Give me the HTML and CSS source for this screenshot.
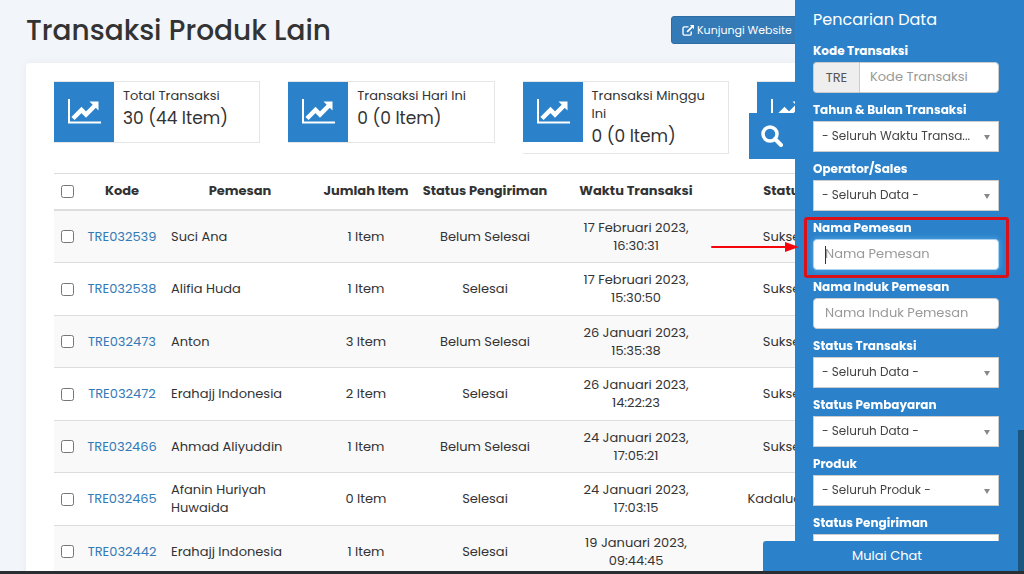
FILE: index.html
```html
<!DOCTYPE html>
<html lang="id">
<head>
<meta charset="utf-8">
<meta name="viewport" content="width=device-width, initial-scale=1">
<title>Transaksi Produk Lain</title>
<link rel="stylesheet" href="styles.css">
</head>
<body>
<svg class="defs" aria-hidden="true">
  <symbol id="chart" viewBox="0 0 34 26">
    <path d="M2 0v23.500h32" fill="none" stroke="currentColor" stroke-width="2"/>
    <path d="M6 19.500l8.500-8.500 4.500 4.500 9-9" fill="none" stroke="currentColor" stroke-width="4.500"/>
    <path d="M22.500 2.500h9v9z" fill="currentColor"/>
  </symbol>
</svg>
<main class="page">
  <header class="page-head">
    <h1 class="page-title">Transaksi Produk Lain</h1>
    <a class="visit" href="#"><svg class="visit-icon" viewBox="0 0 14 12" fill="none" stroke="currentColor" stroke-width="1.500" aria-hidden="true"><path d="M7 2H2.500Q1 2 1 3.500v6Q1 11 2.500 11h6q1.500 0 1.500-1.500V7"/><path d="M5.500 7.500L11 2" stroke-width="2"/><path d="M8.500 0H13v4.500z" fill="currentColor" stroke="none"/></svg>Kunjungi Website</a>
  </header>
  <section class="panel">
    <div class="stats">
      <article class="stat"><div class="stat-icon"><svg><use href="#chart"/></svg></div><div class="stat-text"><div>Total Transaksi</div><div class="stat-value">30 (44 Item)</div></div></article>
      <article class="stat"><div class="stat-icon"><svg><use href="#chart"/></svg></div><div class="stat-text"><div>Transaksi Hari Ini</div><div class="stat-value">0 (0 Item)</div></div></article>
      <article class="stat"><div class="stat-icon"><svg><use href="#chart"/></svg></div><div class="stat-text"><div>Transaksi Minggu Ini</div><div class="stat-value">0 (0 Item)</div></div></article>
      <article class="stat"><div class="stat-icon"><svg><use href="#chart"/></svg></div><div class="stat-text"></div></article>
    </div>
    <table class="orders">
      <colgroup><col class="c-check"><col class="c-code"><col class="c-name"><col class="c-qty"><col class="c-ship"><col class="c-time"><col class="c-state"><col></colgroup>
      <thead><tr><th><input type="checkbox" aria-label="Pilih semua"></th><th>Kode</th><th>Pemesan</th><th>Jumlah Item</th><th>Status Pengiriman</th><th>Waktu Transaksi</th><th>Status</th><th></th></tr></thead>
      <tbody>
        <tr><td><input type="checkbox" aria-label="TRE032539"></td><td><a href="#">TRE032539</a></td><td class="name">Suci Ana</td><td>1 Item</td><td>Belum Selesai</td><td>17 Februari 2023,<br>16:30:31</td><td>Sukses</td><td></td></tr>
        <tr><td><input type="checkbox" aria-label="TRE032538"></td><td><a href="#">TRE032538</a></td><td class="name">Alifia Huda</td><td>1 Item</td><td>Selesai</td><td>17 Februari 2023,<br>15:30:50</td><td>Sukses</td><td></td></tr>
        <tr><td><input type="checkbox" aria-label="TRE032473"></td><td><a href="#">TRE032473</a></td><td class="name">Anton</td><td>3 Item</td><td>Belum Selesai</td><td>26 Januari 2023,<br>15:35:38</td><td>Sukses</td><td></td></tr>
        <tr><td><input type="checkbox" aria-label="TRE032472"></td><td><a href="#">TRE032472</a></td><td class="name">Erahajj Indonesia</td><td>2 Item</td><td>Selesai</td><td>26 Januari 2023,<br>14:22:23</td><td>Sukses</td><td></td></tr>
        <tr><td><input type="checkbox" aria-label="TRE032466"></td><td><a href="#">TRE032466</a></td><td class="name">Ahmad Aliyuddin</td><td>1 Item</td><td>Belum Selesai</td><td>24 Januari 2023,<br>17:05:21</td><td>Sukses</td><td></td></tr>
        <tr><td><input type="checkbox" aria-label="TRE032465"></td><td><a href="#">TRE032465</a></td><td class="name">Afanin Huriyah<br>Huwaida</td><td>0 Item</td><td>Selesai</td><td>24 Januari 2023,<br>17:03:15</td><td>Kadaluarsa</td><td></td></tr>
        <tr><td><input type="checkbox" aria-label="TRE032442"></td><td><a href="#">TRE032442</a></td><td class="name">Erahajj Indonesia</td><td>1 Item</td><td>Selesai</td><td>19 Januari 2023,<br>09:44:45</td><td></td><td></td></tr>
      </tbody>
    </table>
  </section>
</main>

<aside class="filter">
  <button class="filter-toggle" type="button" aria-label="Cari"><svg viewBox="0 0 22 22" fill="none" stroke="currentColor" aria-hidden="true"><circle cx="9" cy="9" r="7" stroke-width="3.500"/><path d="M14 14l6 6" stroke-width="4" stroke-linecap="round"/></svg></button>
  <h2 class="filter-title">Pencarian Data</h2>
  <form class="filter-form">
    <div class="field"><label for="kode">Kode Transaksi</label><div class="group"><span class="prefix">TRE</span><input class="box" id="kode" type="text" placeholder="Kode Transaksi"></div></div>
    <div class="field"><label for="waktu">Tahun &amp; Bulan Transaksi</label><div class="pick"><select class="box" id="waktu"><option>- Seluruh Waktu Transa...</option></select></div></div>
    <div class="field"><label for="sales">Operator/Sales</label><div class="pick"><select class="box" id="sales"><option>- Seluruh Data -</option></select></div></div>
    <div class="field marked"><label for="nama">Nama Pemesan</label><input class="box active" id="nama" type="text" placeholder="Nama Pemesan"><i class="caret"></i><i class="outline"></i>
      <svg class="arrow" viewBox="0 0 88 12" aria-hidden="true"><path d="M1 6h74" stroke="#f5060c" stroke-width="2" stroke-linecap="round"/><path d="M74 1l14 5-14 5z" fill="#f5060c"/></svg></div>
    <div class="field"><label for="induk">Nama Induk Pemesan</label><input class="box" id="induk" type="text" placeholder="Nama Induk Pemesan"></div>
    <div class="field"><label for="status">Status Transaksi</label><div class="pick"><select class="box" id="status"><option>- Seluruh Data -</option></select></div></div>
    <div class="field"><label for="bayar">Status Pembayaran</label><div class="pick"><select class="box" id="bayar"><option>- Seluruh Data -</option></select></div></div>
    <div class="field"><label for="produk">Produk</label><div class="pick"><select class="box" id="produk"><option>- Seluruh Produk -</option></select></div></div>
    <div class="field"><label for="kirim">Status Pengiriman</label><div class="pick"><select class="box" id="kirim"><option>- Seluruh Data -</option></select></div></div>
  </form>
</aside>
<button class="chat" type="button">Mulai Chat</button>
<div class="scroll-thumb"></div>
<div class="bottom-edge"></div>
</body>
</html>
```
FILE: styles.css
```css
* { box-sizing: border-box; }
body {
  margin: 0;
  height: 100vh;
  overflow: hidden;
  background: #f2f5f9;
  color: #333;
  font: 13px/18px Poppins, Inter, "Open Sans", sans-serif;
}
input, select, button { font: inherit; color: inherit; }
a { color: #337ab7; text-decoration: none; }
.defs { display: none; }

.page { padding: 0 33px 0 26px; }
.page-head {
  display: grid;
  grid-template-columns: 1fr 320px;
  align-items: start;
  padding: 13px 0 14px;
}
.page-title { margin: 0; font-size: 28px; line-height: 36px; font-weight: 500; }
.visit {
  display: flex;
  justify-self: start;
  align-items: center;
  gap: 2px;
  height: 28px;
  margin-top: 3px;
  padding: 0 10px;
  border: 1px solid #2e6da4;
  border-radius: 3px;
  background: #337ab7;
  color: #fff;
  font-size: 11px;
  white-space: nowrap;
}
.visit:last-child { padding-right: 24px; }
.visit-icon { width: 13px; height: 11px; }

.panel {
  padding: 18px 28px;
  border-radius: 4px;
  background: #fff;
  box-shadow: 0 0 8px rgba(0, 0, 0, .05);
}
.stats {
  display: grid;
  grid-template-columns: repeat(4, 1fr);
  gap: 28px;
  align-items: start;
  margin-bottom: 19px;
}
.stat { display: flex; border: 1px solid #e4e6e8; border-left: 0; }
.stat-icon {
  display: grid;
  place-items: center;
  flex: none;
  width: 60px;
  height: 60px;
  background: #2b82ca;
  color: #fff;
}
.stat-icon svg { width: 34px; height: 26px; }
.stat-text { padding: 5px 9px 4px; }
.stat-value { font-size: 17px; line-height: 26px; }

.orders { width: 100%; table-layout: fixed; border-collapse: collapse; text-align: center; }
.c-check { width: 26px; }
.c-code { width: 84px; }
.c-name { width: 152px; }
.c-qty { width: 100px; }
.c-ship { width: 138px; }
.c-time { width: 164px; }
.c-state { width: 134px; }
.orders th { height: 36px; padding: 0; border-top: 1px solid #ddd; border-bottom: 2px solid #ddd; white-space: nowrap; font-weight: 700; }
.orders td { height: 52px; padding: 8px 0 7px; border-bottom: 1px solid #ddd; }
.orders .name { padding-left: 7px; text-align: left; }
.orders tbody tr:nth-child(odd) { background: #f9f9f9; }
.orders tbody tr:nth-child(even) td { height: 53px; }
.orders input { display: block; width: 13px; height: 13px; margin: 0 auto; }

.filter {
  position: fixed;
  top: 0;
  right: 0;
  bottom: 0;
  width: 229px;
  padding: 8px 25px 0 18px;
  background: #2b82ca;
  color: #fff;
}
.filter-toggle {
  position: absolute;
  top: 113px;
  right: 100%;
  display: grid;
  place-items: center;
  width: 46px;
  height: 46px;
  padding: 0;
  border: 0;
  background: #2b82ca;
}
.filter-toggle svg { width: 22px; height: 22px; }
.filter-title { margin: 0 0 10px; font-size: 16px; line-height: 24px; font-weight: 400; }
.field { position: relative; margin-bottom: 8px; }
.field label { display: block; height: 20px; font-size: 12px; font-weight: 700; white-space: nowrap; }
.box {
  display: block;
  width: 100%;
  min-width: 0;
  height: 31px;
  padding: 0 11px 2px;
  border: 1px solid #ccc;
  border-radius: 4px;
  background: #fff;
  color: #555;
}
.box::placeholder { color: #999; opacity: 1; }
.box.active { outline: 0; border-color: #a9d3f3; box-shadow: 0 0 6px rgba(140, 205, 255, .5); }
select.box { appearance: none; padding: 0 8px 2px; border-radius: 0; font-size: 12px; color: #444; }
.pick { position: relative; }
.pick::after {
  content: "";
  position: absolute;
  top: 14px;
  right: 9px;
  border: solid transparent;
  border-width: 5px 3px 0;
  border-top-color: #888;
  pointer-events: none;
}
.group { display: flex; }
.group .box { border-radius: 0 4px 4px 0; padding: 0 10px 2px; }
.prefix {
  flex: none;
  width: 46px;
  height: 31px;
  border: 1px solid #ccc;
  border-right: 0;
  border-radius: 4px 0 0 4px;
  background: #eee;
  color: #555;
  line-height: 29px;
  text-align: center;
}
.caret { position: absolute; left: 12px; bottom: 6px; width: 1px; height: 18px; background: #333; }
.outline { position: absolute; inset: -2px -10px -8px -9px; border: 3px solid #d9111b; border-radius: 3px; pointer-events: none; }
.arrow { position: absolute; right: 100%; top: 22px; width: 88px; height: 12px; margin-right: 14px; }

.chat {
  position: fixed;
  right: 0;
  bottom: 3px;
  width: 261px;
  height: 30px;
  padding: 0 13px 0 0;
  border: 0;
  border-radius: 3px 0 0 0;
  background: #2b82ca;
  color: #fff;
}
.scroll-thumb { position: fixed; right: 0; bottom: 3px; width: 6px; height: 141px; background: #1b567f; }
.bottom-edge { position: fixed; left: 0; right: 0; bottom: 0; height: 3px; background: #292e33; }
```
